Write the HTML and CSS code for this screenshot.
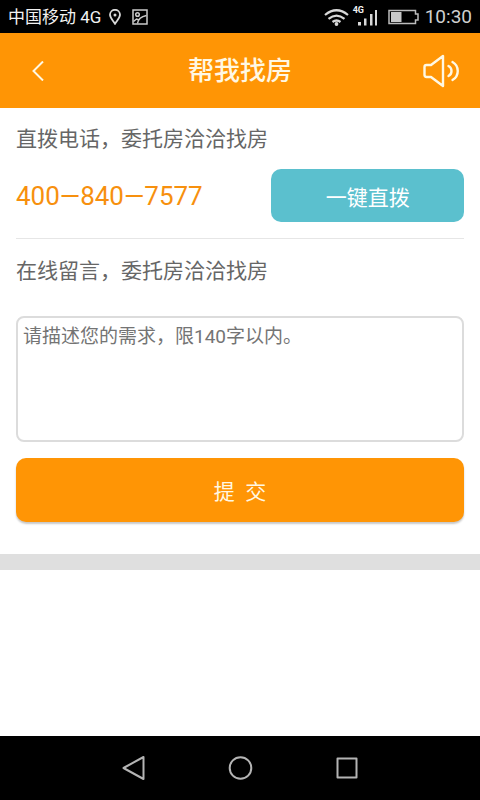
FILE: index.html
```html
<!DOCTYPE html>
<html lang="zh-CN">
<head>
<meta charset="utf-8">
<meta name="viewport" content="width=device-width, initial-scale=1">
<title>帮我找房</title>
<link rel="stylesheet" href="styles.css">
</head>
<body>
<div class="status">
  <div class="status-side">
    <span class="carrier">中国移动 4G</span>
    <svg class="pin" width="12" height="16" viewBox="0 0 12 16" fill="none" stroke="#d8d8d8" stroke-width="1.800"><path d="M6 14.800C4 11.400 1 8.800 1 5.800a5 5 0 0 1 10 0c0 3-3 5.600-5 9z"/><circle cx="6" cy="6" r="1.500" fill="#d8d8d8" stroke="none"/></svg>
    <svg width="16" height="16" viewBox="0 0 16 16" fill="none" stroke="#cacaca" stroke-width="1.500"><rect x="1" y="1" width="14" height="14"/><circle cx="5.500" cy="5.500" r="1.800"/><path d="M1.500 12.500l3-2.500 2.500 1M5.500 14.500C6 10.500 9 7.500 14.500 6.500"/></svg>
  </div>
  <div class="status-side">
    <svg width="54" height="24" viewBox="0 0 54 24"><g fill="none" stroke="#d8d8d8" stroke-width="2.200"><path d="M2 10q11.500-9.500 23 0M5.500 13.800q8-6.500 16 0M9.500 17q4-3 8 0"/></g><circle cx="13.500" cy="19" r="1.900" fill="#d8d8d8"/><path fill="#d8d8d8" d="M36 17h3v3.500h-3zM42 13.500h2.500v7H42zM48 9h2.500v11.500H48zM53 5h2v15.500h-2z" transform="translate(-1)"/></svg>
    <span class="network">4G</span>
    <svg class="battery" width="31" height="16" viewBox="0 0 31 16"><path d="M1 1.500h26.500v3.500H30v6h-2.500v3.500H1z" fill="none" stroke="#bcbcbc" stroke-width="1.500"/><path d="M3 3h10.500v10H3z" fill="#c8c8c8"/></svg>
    <time class="clock">10:30</time>
  </div>
</div>
<header class="header">
  <button class="icon-button" type="button" aria-label="返回"><svg width="12" height="20" viewBox="0 0 12 20" fill="none" stroke="#fff8e4" stroke-width="2"><path d="M11 .5 1.500 10l9.500 9.500"/></svg></button>
  <h1 class="title">帮我找房</h1>
  <button class="icon-button" type="button" aria-label="声音"><svg width="38" height="34" viewBox="0 0 38 34" fill="none" stroke="#fff8e4" stroke-width="2.400" stroke-linejoin="round" stroke-linecap="round"><path d="M3.500 11H8L20 2v30L8 23H3.500q-2 0-2-2v-8q0-2 2-2zM25.500 12c4 2 4 8 0 10M29.500 8c7 4 7 14 0 18"/></svg></button>
</header>
<main class="content">
  <section class="call">
    <h2 class="heading">直拨电话，委托房洽洽找房</h2>
    <div class="call-row">
      <a class="phone" href="tel:4008407577">400—840—7577</a>
      <button class="dial" type="button">一键直拨</button>
    </div>
  </section>
  <form class="message">
    <label class="heading" for="need">在线留言，委托房洽洽找房</label>
    <textarea class="need" id="need" maxlength="140" placeholder="请描述您的需求，限140字以内。"></textarea>
    <button class="submit" type="button">提&ensp;交</button>
  </form>
</main>
<nav class="nav">
  <button class="nav-button" type="button" aria-label="后退"><svg width="28" height="28" viewBox="0 0 28 28"><path d="M24.500 3v22L4.500 14z"/></svg></button>
  <button class="nav-button" type="button" aria-label="主页"><svg width="28" height="28" viewBox="0 0 28 28"><circle cx="14.500" cy="14" r="10.800"/></svg></button>
  <button class="nav-button" type="button" aria-label="最近任务"><svg width="28" height="28" viewBox="0 0 28 28"><path d="M4.500 4.500h19v19h-19z"/></svg></button>
</nav>
</body>
</html>
```
FILE: styles.css
```css
* {
  box-sizing: border-box;
}

body {
  margin: 0;
  min-height: 100vh;
  display: flex;
  flex-direction: column;
  background: #fff;
  color: #666;
  font-family: Roboto, "Noto Sans CJK SC", sans-serif;
}

button {
  padding: 0;
  border: 0;
  background: none;
  font-family: inherit;
}

svg {
  display: block;
}

.status {
  display: flex;
  justify-content: space-between;
  align-items: center;
  height: 33px;
  padding: 0 8px;
  background: #000;
  color: #f2f2f2;
}

.status-side {
  display: flex;
  align-items: center;
  position: relative;
}

.carrier {
  margin-right: 8px;
  font-size: 17px;
  line-height: 24px;
}

.pin {
  margin-right: 11px;
}

.network {
  position: absolute;
  left: 30px;
  top: 0;
  font-size: 9px;
  font-weight: 700;
  line-height: 10px;
}

.battery {
  margin: 0 6px 0 11px;
}

.clock {
  color: #d0d0d0;
  font-size: 19px;
  line-height: 24px;
}

.header {
  display: flex;
  justify-content: space-between;
  align-items: center;
  height: 75px;
  background: #ff9505;
}

.icon-button {
  display: grid;
  place-items: center;
  width: 76px;
  height: 74px;
}

.title {
  margin: 0;
  color: #fff8e4;
  font-size: 26px;
  font-weight: 500;
  line-height: 40px;
}

.content {
  padding: 15px 16px 32px;
  border-bottom: 16px solid #dfdfdf;
}

.call {
  padding-bottom: 16px;
  border-bottom: 1px solid #e6e6e6;
}

.heading {
  display: block;
  margin: 0;
  font-size: 21px;
  font-weight: 400;
  line-height: 32px;
}

.call-row {
  display: flex;
  justify-content: space-between;
  align-items: center;
  margin-top: 14px;
}

.phone {
  color: #f7900e;
  font-size: 26px;
  line-height: 32px;
  text-decoration: none;
}

.dial {
  width: 43%;
  height: 53px;
  border-radius: 10px;
  background: #5bc0ce;
  color: #fff;
  font-size: 21px;
}

.message {
  padding-top: 16px;
}

.need {
  display: block;
  width: 100%;
  height: 126px;
  margin: 29px 0 16px;
  padding: 5px;
  border: 2px solid #dcdcdc;
  border-radius: 8px;
  background: #fff;
  color: #666;
  font-family: inherit;
  font-size: 19px;
  line-height: 28px;
  resize: none;
}

.need::placeholder {
  color: #747474;
}

.submit {
  display: block;
  width: 100%;
  height: 64px;
  border-radius: 10px;
  background: #ff9505;
  box-shadow: 0 2px 2px #c8c8c8;
  color: #fff8e4;
  font-size: 21px;
}

.nav {
  display: flex;
  justify-content: space-around;
  align-items: center;
  height: 64px;
  margin-top: auto;
  padding: 0 80px;
  background: #000;
}

.nav-button svg {
  fill: none;
  stroke: #b4b4b4;
  stroke-width: 2;
  stroke-linejoin: round;
}
```
